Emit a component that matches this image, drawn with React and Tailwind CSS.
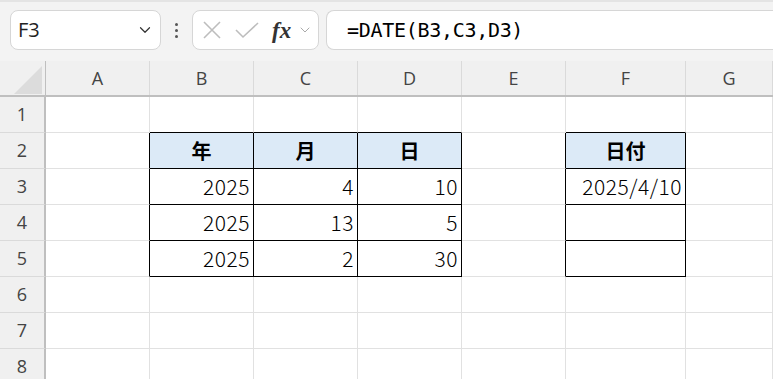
import { ChevronDown } from "lucide-react";

const cols = ["A", "B", "C", "D", "E", "F", "G"];
const colW = ["w-[104px]", "w-[104px]", "w-[104px]", "w-[104px]", "w-[104px]", "w-[120px]", "flex-1"];

// cell contents, by row (1-8) and col index (0-6)
const data = {
  2: { 1: "年", 2: "月", 3: "日", 5: "日付" },
  3: { 1: "2025", 2: "4", 3: "10", 5: "2025/4/10" },
  4: { 1: "2025", 2: "13", 3: "5" },
  5: { 1: "2025", 2: "2", 3: "30" },
};

function inTable(r, c) {
  if (r < 2 || r > 5) return false;
  return c === 1 || c === 2 || c === 3 || c === 5;
}

function Cell({ r, c }) {
  const table = inTable(r, c);
  const rightBlack = table || inTable(r, c + 1);
  const bottomBlack = table || inTable(r + 1, c);
  const header = r === 2 && table;
  const text = data[r]?.[c];
  return (
    <div
      className={`${colW[c]} h-[36px] shrink-0 border-r border-b flex items-center px-[3px] ${
        rightBlack ? "border-r-black" : "border-r-[#e1e1e1]"
      } ${bottomBlack ? "border-b-black" : "border-b-[#e1e1e1]"} ${
        header ? "bg-[#dceaf7] justify-center font-bold" : "bg-white justify-end"
      }`}
    >
      {text && (
        <span className={`${header ? "text-[20px]" : "text-[21px] font-light tracking-[0.5px]"} text-black leading-none`}>{text}</span>
      )}
    </div>
  );
}

export default function App() {
  return (
    <div className="w-[773px] h-[379px] overflow-hidden bg-white" style={{ fontFamily: '"Noto Sans CJK JP", sans-serif' }}>
      {/* formula bar */}
      <div className="h-[61px] bg-[#f3f3f3] border-t-2 border-t-[#e4e4e4] flex items-start pt-[8px] pl-[10px]">
        <div className="w-[151px] h-[40px] bg-white border border-[#d6d6d6] rounded-lg flex items-center justify-between pl-[7px] pr-[6px]">
          <span className="text-[20px] text-[#222]" style={{ fontFamily: '"Open Sans", sans-serif' }}>F3</span>
          <ChevronDown size={18} strokeWidth={1.6} className="text-[#333]" />
        </div>
        <div className="w-[31px] h-[40px] flex flex-col items-center justify-center gap-[3px]">
          <span className="w-[3px] h-[3px] bg-[#555] rounded-full" />
          <span className="w-[3px] h-[3px] bg-[#555] rounded-full" />
          <span className="w-[3px] h-[3px] bg-[#555] rounded-full" />
        </div>
        <div className="w-[127px] h-[40px] bg-white border border-[#d6d6d6] rounded-lg flex items-center pl-[8px]">
          <svg width="22" height="22" viewBox="0 0 22 22" className="shrink-0">
            <path d="M3 3 L19 19 M19 3 L3 19" stroke="#bdbdbd" strokeWidth="1.6" fill="none" />
          </svg>
          <svg width="26" height="22" viewBox="0 0 26 22" className="ml-[11px] shrink-0">
            <path d="M2 11 L9 18 L24 4" stroke="#bdbdbd" strokeWidth="1.6" fill="none" />
          </svg>
          <span className="ml-[12px] text-[23px] italic font-bold text-[#333] leading-none" style={{ fontFamily: '"Liberation Serif", serif' }}>
            fx
          </span>
          <ChevronDown size={16} strokeWidth={1.5} className="text-[#aaa] ml-[6px]" />
        </div>
        <div className="ml-[7px] flex-1 h-[40px] bg-white border border-[#d6d6d6] border-r-0 rounded-l-lg flex items-center pl-[20px]">
          <span className="text-[20px] text-black" style={{ fontFamily: '"DejaVu Sans Mono", monospace', letterSpacing: "-0.3px" }}>
            =DATE(B3,C3,D3)
          </span>
        </div>
      </div>

      {/* column headers */}
      <div className="flex h-[36px] bg-[#f0f0f0] border-b-2 border-b-[#bfbfbf]" style={{ fontFamily: '"Open Sans", sans-serif' }}>
        <div className="w-[46px] shrink-0 border-r border-r-[#bfbfbf] relative">
          <svg width="30" height="30" viewBox="0 0 30 30" className="absolute left-[13px] top-[4px]">
            <path d="M29 1 L29 29 L1 29 Z" fill="#dcdcdc" />
          </svg>
        </div>
        {cols.map((c, i) => (
          <div key={c} className={`${colW[i]} shrink-0 border-r border-r-[#dadada] flex items-center justify-center text-[18px] text-[#444]`}>
            {c}
          </div>
        ))}
      </div>

      {/* rows */}
      {[1, 2, 3, 4, 5, 6, 7, 8].map((r) => (
        <div key={r} className="flex">
          <div className="w-[46px] h-[36px] shrink-0 bg-[#f0f0f0] border-r-2 border-r-[#bfbfbf] border-b border-b-[#dadada] flex items-center justify-center text-[18px] text-[#444]" style={{ fontFamily: '"Open Sans", sans-serif' }}>
            {r}
          </div>
          {cols.map((c, i) => (
            <Cell key={c} r={r} c={i} />
          ))}
        </div>
      ))}
    </div>
  );
}
